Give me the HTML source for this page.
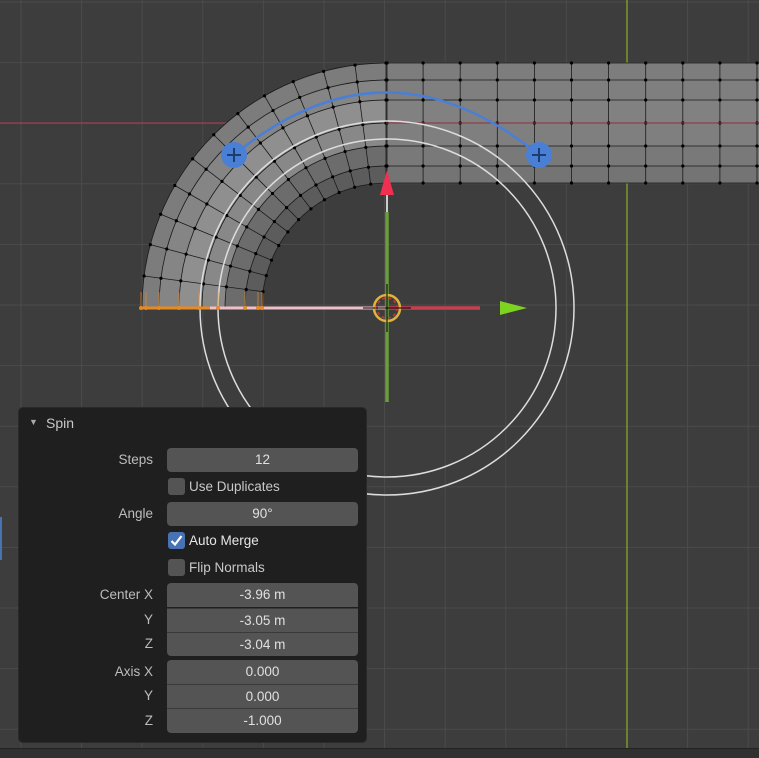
<!DOCTYPE html>
<html><head><meta charset="utf-8"><style>
html,body{margin:0;padding:0;width:759px;height:757px;overflow:hidden;background:#3d3d3d;font-family:"Liberation Sans",sans-serif}
svg{position:absolute;left:0;top:0}
#panel{position:absolute;left:18px;top:407px;width:349px;height:336px;background:#1f1f1f;border-radius:5px;border:1px solid #2a2a2a;box-sizing:border-box}
.t{position:absolute;font-size:13.5px;color:#c8c8c8;white-space:nowrap}
.lab{position:absolute;right:213px;font-size:13.5px;color:#bdbdbd;text-align:right}
.f{position:absolute;left:148px;width:191px;height:24px;background:#545454;border-radius:4px;color:#e0e0e0;font-size:13.5px;text-align:center;line-height:24px}
.sq{border-radius:0}
.cb{position:absolute;left:149px;width:17px;height:17px;background:#545454;border-radius:3px}
</style></head><body>
<svg width="759" height="757" id="s" xmlns="http://www.w3.org/2000/svg"></svg>
<div id="panel">
 <div class="t" style="left:10px;top:9px;font-size:9px;color:#aaa">▼</div>
 <div class="t" style="left:27px;top:7px;font-size:14px">Spin</div>
 <div class="lab" style="top:44px">Steps</div><div class="f" style="top:40px">12</div>
 <div class="cb" style="top:70px"></div><div class="t" style="left:170px;top:71px">Use Duplicates</div>
 <div class="lab" style="top:98px">Angle</div><div class="f" style="top:94px">90°</div>
 <div class="cb" style="top:124px;background:#4772b3"><svg width="17" height="17" style="position:absolute"><path d="M3.5 9 L7 12.5 L13.5 4" stroke="#fff" stroke-width="2.2" fill="none"/></svg></div><div class="t" style="left:170px;top:125px;color:#e6e6e6">Auto Merge</div>
 <div class="cb" style="top:151px"></div><div class="t" style="left:170px;top:152px">Flip Normals</div>
 <div class="lab" style="top:179px">Center X</div><div class="f" style="top:175px;border-radius:4px 4px 0 0">-3.96 m</div>
 <div class="lab" style="top:204px">Y</div><div class="f sq" style="top:200px;border-top:1px solid #3a3a3a;height:23px">-3.05 m</div>
 <div class="lab" style="top:228px">Z</div><div class="f" style="top:224px;border-radius:0 0 4px 4px;border-top:1px solid #3a3a3a;height:23px">-3.04 m</div>
 <div class="lab" style="top:256px">Axis X</div><div class="f" style="top:252px;border-radius:4px 4px 0 0">0.000</div>
 <div class="lab" style="top:280px">Y</div><div class="f sq" style="top:276px;border-top:1px solid #3a3a3a;height:23px">0.000</div>
 <div class="lab" style="top:305px">Z</div><div class="f" style="top:300px;border-radius:0 0 4px 4px;border-top:1px solid #3a3a3a;height:24px">-1.000</div>
</div>
<div style="position:absolute;left:0;top:748px;width:759px;height:9px;background:#303030;border-top:1px solid #232323"></div>
<div style="position:absolute;left:0;top:517px;width:2px;height:43px;background:#4772b3"></div>
<script>
var s=document.getElementById('s'),h='';
for(var k=0;k<13;k++){var x=21+60.6*k,y=2+60.6*k;h+='<line x1="'+x+'" y1="0" x2="'+x+'" y2="757" stroke="#4b4b4b"/><line x1="0" y1="'+y+'" x2="759" y2="'+y+'" stroke="#4b4b4b"/>';}
h+='<line x1="0" y1="123" x2="759" y2="123" stroke="#a04050" stroke-width="1.3"/><line x1="627" y1="0" x2="627" y2="748" stroke="#7a9a2a" stroke-width="1.5"/>';
var cx=387,cy=308;
function P(r,a){return [cx-r*Math.cos(a),cy-r*Math.sin(a)];}
function ring(r1,r2,col){var a=P(r1,0),b=P(r1,Math.PI/2),c=P(r2,Math.PI/2),d=P(r2,0);
return '<path d="M'+a+' A'+r1+' '+r1+' 0 0 1 '+b+' L'+c+' A'+r2+' '+r2+' 0 0 0 '+d+'Z" fill="'+col+'"/>';}
var radii=[245,228,208,185,162,142,125],cols=['#7c7c7c','#858585','#8f8f8f','#888','#6c6c6c','#5c5c5c'];
for(var i=0;i<6;i++)h+=ring(radii[i],radii[i+1],cols[i]);
var ys=[63,80,100,123,146,166,183],sc=['#7d7d7d','#7f7f7f','#818181','#7f7f7f','#797979','#747474'];
for(i=0;i<6;i++)h+='<rect x="386" y="'+ys[i]+'" width="373" height="'+(ys[i+1]-ys[i])+'" fill="'+sc[i]+'"/>';
for(i=0;i<7;i++){var r=radii[i];var a=P(r,0),b=P(r,Math.PI/2);h+='<path d="M'+a+' A'+r+' '+r+' 0 0 1 '+b+'" fill="none" stroke="#1a1a1a" stroke-width="0.8"/><line x1="386" y1="'+ys[i]+'" x2="759" y2="'+ys[i]+'" stroke="#1a1a1a" stroke-width="0.8"/>';}
var dots='';
for(var j=0;j<=12;j++){var an=j*Math.PI/24,p=P(245,an),q=P(125,an);h+='<line x1="'+p[0]+'" y1="'+p[1]+'" x2="'+q[0]+'" y2="'+q[1]+'" stroke="#1a1a1a" stroke-width="0.8"/>';
 for(i=0;i<7;i++){var d=P(radii[i],an);dots+='<circle cx="'+d[0]+'" cy="'+d[1]+'" r="1.6" fill="#000"/>';}}
for(var x=386;x<760;x+=37.1){h+='<line x1="'+x+'" y1="63" x2="'+x+'" y2="183" stroke="#1a1a1a" stroke-width="0.8"/>';for(i=0;i<7;i++)dots+='<circle cx="'+x+'" cy="'+ys[i]+'" r="1.6" fill="#000"/>';}
h+=dots;
h+='<line x1="386" y1="123" x2="759" y2="123" stroke="#a04050" stroke-width="1.2" opacity=".8"/>';
h+='<circle cx="387" cy="308" r="169" fill="none" stroke="#ddd" stroke-width="1.5"/><circle cx="387" cy="308" r="187" fill="none" stroke="#ddd" stroke-width="1.5"/>';
h+='<path d="M234,155 Q386,30 539,155" fill="none" stroke="#4a7fd6" stroke-width="2.5"/>';
[[234,155],[539,155]].forEach(function(c){h+='<circle cx="'+c[0]+'" cy="'+c[1]+'" r="13" fill="#4a7fd6"/><path d="M'+(c[0]-7)+' '+c[1]+'h14M'+c[0]+' '+(c[1]-7)+'v14" stroke="#1d3c70" stroke-width="2"/>';});
h+='<line x1="141" y1="308" x2="210" y2="308" stroke="#e88a20" stroke-width="3"/><line x1="210" y1="308" x2="387" y2="308" stroke="#f0c0c8" stroke-width="3"/><line x1="387" y1="308" x2="480" y2="308" stroke="#c8404f" stroke-width="3.5"/>';
[141,146,159,179,199,218,245,258,262].forEach(function(x){h+='<line x1="'+x+'" y1="292" x2="'+x+'" y2="308" stroke="#e88a20" stroke-width="1" opacity=".7"/><circle cx="'+x+'" cy="308" r="2" fill="#e88a20"/>';});
h+='<polygon points="500,301 527,308 500,315" fill="#7ed321"/>';
h+='<line x1="387" y1="212" x2="387" y2="402" stroke="#6a9e3a" stroke-width="3.5"/><line x1="387" y1="183" x2="387" y2="212" stroke="#ccc" stroke-width="2"/>';
h+='<polygon points="387,170 380,195 394,195" fill="#f03050"/>';
h+='<circle cx="387" cy="308" r="13" fill="none" stroke="#e0b040" stroke-width="2.5"/><circle cx="387" cy="308" r="10" fill="none" stroke="#c04030" stroke-width="1.5" stroke-dasharray="3 3"/><path d="M363 308h48M387 284v48" stroke="#000" stroke-width="1"/>';
h+='<circle cx="272" cy="760" r="6" fill="none" stroke="#999" stroke-width="1.5"/><circle cx="583" cy="760" r="6" fill="#bbb"/>';
s.innerHTML=h;
</script>
</body></html>
